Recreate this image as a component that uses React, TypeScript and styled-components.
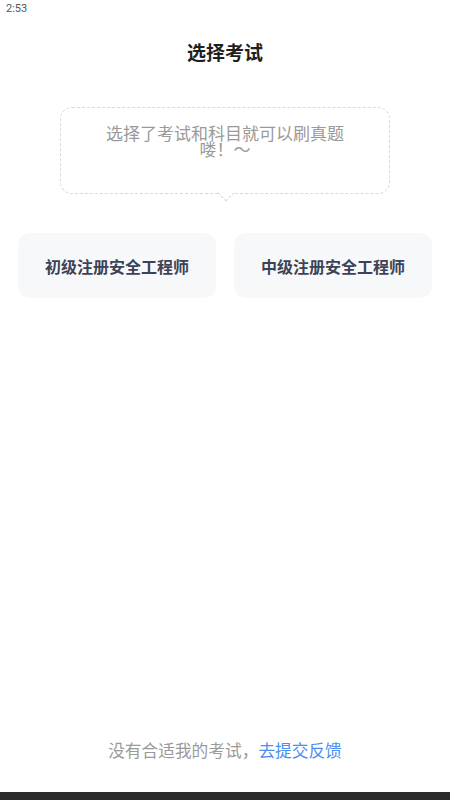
import React from "react";
import styled, { createGlobalStyle } from "styled-components";

const Global = createGlobalStyle`
  html, body { margin: 0; padding: 0; background: #fff; }
  body { font-family: "Noto Sans CJK SC", "Noto Sans", sans-serif; }
  * { box-sizing: border-box; }
`;

const Page = styled.div`
  width: 450px;
  height: 800px;
  display: flex;
  flex-direction: column;
  background: #fff;
  overflow: hidden;
`;

const StatusBar = styled.div`
  height: 20px;
  padding: 0 0 0 6px;
  font-family: Roboto, "Noto Sans", sans-serif;
  font-size: 11px;
  line-height: 17px;
  color: #555;
`;

const Title = styled.h1`
  margin: 18px 0 0;
  font-size: 19px;
  line-height: 28px;
  font-weight: 700;
  color: #1f1f1f;
  text-align: center;
`;

const Bubble = styled.div`
  position: relative;
  width: 330px;
  height: 87px;
  margin: 41px auto 0;
  padding-top: 17px;
  border: 1px dashed #d9d9d9;
  border-radius: 12px;
  text-align: center;
  font-size: 17px;
  line-height: 16px;
  color: #9a9a9a;

  &::after {
    content: "";
    position: absolute;
    left: 50%;
    bottom: -6px;
    width: 11px;
    height: 11px;
    margin-left: -5.5px;
    background: #fff;
    border-right: 1px dashed #d9d9d9;
    border-bottom: 1px dashed #d9d9d9;
    transform: rotate(45deg);
  }
`;

const BubbleText = styled.p`
  margin: 0 auto;
  width: 240px;
`;

const Cards = styled.div`
  display: grid;
  grid-template-columns: 1fr 1fr;
  gap: 18px;
  padding: 0 18px;
  margin-top: 39px;
`;

const Card = styled.button`
  height: 65px;
  border: none;
  border-radius: 12px;
  background: #f7f8fa;
  font-family: "Noto Sans CJK SC", sans-serif;
  font-size: 16px;
  font-weight: 700;
  color: #3c4356;
  display: flex;
  align-items: center;
  justify-content: center;
  padding: 0;
`;

const Spacer = styled.div`
  flex: 1;
`;

const Footer = styled.div`
  height: 24px;
  line-height: 24px;
  margin-bottom: 30px;
  text-align: center;
  font-size: 16.7px;
  color: #9a9a9a;
`;

const Link = styled.span`
  color: #4a8ef2;
`;

const NavBar = styled.div`
  height: 8px;
  background: #2b2b2b;
`;

export default function App() {
  return (
    <Page>
      <Global />
      <StatusBar>2:53</StatusBar>
      <Title>选择考试</Title>
      <Bubble>
        <BubbleText>选择了考试和科目就可以刷真题喽！～</BubbleText>
      </Bubble>
      <Cards>
        <Card>初级注册安全工程师</Card>
        <Card>中级注册安全工程师</Card>
      </Cards>
      <Spacer />
      <Footer>
        没有合适我的考试，<Link>去提交反馈</Link>
      </Footer>
      <NavBar />
    </Page>
  );
}
